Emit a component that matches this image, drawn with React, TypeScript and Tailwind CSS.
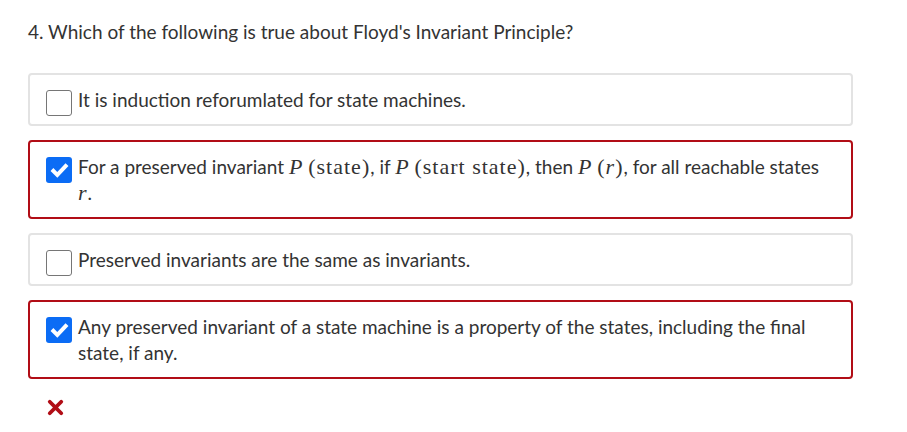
import React from "react";

const sans = { fontFamily: "Lato, 'Noto Sans', sans-serif" };
const serif = { fontFamily: "'Liberation Serif', 'DejaVu Serif', serif" };

function Check({ checked }: { checked: boolean }) {
  if (!checked) {
    return <span className="mt-[3px] -mb-[3px] block h-[26px] w-[26px] shrink-0 rounded-[3px] border border-[#767676] bg-white" />;
  }
  return (
    <span className="mt-[3px] -mb-[3px] flex h-[26px] w-[26px] shrink-0 items-center justify-center rounded-[3px] bg-[#0b6cf5]">
      <svg viewBox="0 0 24 24" className="h-[21px] w-[21px]" fill="none" stroke="white" strokeWidth={4.6} strokeLinecap="square">
        <path d="M5 12.5l4.5 4.5L19 7" />
      </svg>
    </span>
  );
}

function M({ children, i }: { children: React.ReactNode; i?: boolean }) {
  return (
    <span className={`text-[22px] tracking-[1px] ${i ? "italic" : ""}`} style={serif}>
      {children}
    </span>
  );
}

function Option({ checked, children }: { checked: boolean; children: React.ReactNode }) {
  return (
    <div
      className={`flex items-start gap-[6px] rounded-[4px] border-2 pl-4 pr-4 pt-[12px] pb-[11px] ${
        checked ? "border-[#b10d16]" : "border-[#e3e3e3]"
      }`}
    >
      <Check checked={checked} />
      <div className="text-[19px] leading-[26px] text-[#333]">{children}</div>
    </div>
  );
}

export default function App() {
  return (
    <div className="min-h-screen bg-white px-[28px] pt-[19px]" style={sans}>
      <h2 className="text-[19px] leading-[26px] text-[#333]">
        4. Which of the following is true about Floyd's Invariant Principle?
      </h2>
      <div className="mt-[28px] flex w-[825px] flex-col gap-[14px]">
        <Option checked={false}>It is induction reforumlated for state machines.</Option>
        <Option checked={true}>
          For a preserved invariant <M i>P</M> <M>(state)</M>, if <M i>P</M> <M>(start state)</M>, then <M i>P</M>{" "}
          <M>
            (<i>r</i>)
          </M>
          , for all reachable states <M i>r</M>.
        </Option>
        <Option checked={false}>Preserved invariants are the same as invariants.</Option>
        <Option checked={true}>
          Any preserved invariant of a state machine is a property of the states, including the final state, if any.
        </Option>
      </div>
      <div className="mt-[20px] pl-[19px]">
        <svg viewBox="0 0 16 16" className="h-[17px] w-[17px]">
          <path d="M2.6 2.6l10.8 10.8M13.4 2.6L2.6 13.4" stroke="#b10d16" strokeWidth={3.6} strokeLinecap="round" />
        </svg>
      </div>
    </div>
  );
}
